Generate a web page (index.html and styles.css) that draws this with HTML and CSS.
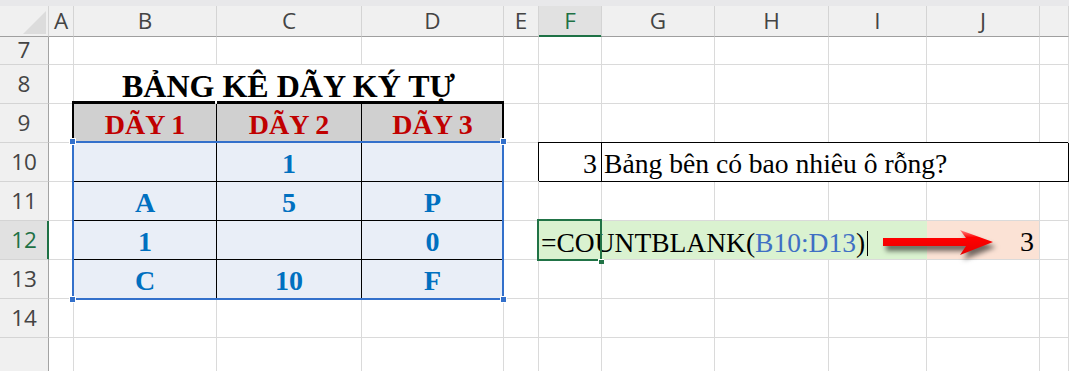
FILE: index.html
```html
<!DOCTYPE html>
<html lang="vi">
<head>
<meta charset="utf-8">
<title>Bảng kê dãy ký tự</title>
<link rel="stylesheet" href="styles.css">
</head>
<body>
<div class="app">
  <div class="topbar"></div>
  <div class="sheet">
    <!-- column headers -->
    <div class="ch corner"></div>
    <div class="ch">A</div>
    <div class="ch">B</div>
    <div class="ch">C</div>
    <div class="ch">D</div>
    <div class="ch">E</div>
    <div class="ch on">F</div>
    <div class="ch">G</div>
    <div class="ch">H</div>
    <div class="ch">I</div>
    <div class="ch">J</div>
    <div class="ch"></div>

    <!-- row 7 -->
    <div class="rh">7</div>
    <div class="c"></div><div class="c"></div><div class="c"></div><div class="c"></div><div class="c"></div>
    <div class="c"></div><div class="c"></div><div class="c"></div><div class="c"></div><div class="c"></div><div class="c"></div>

    <!-- row 8 -->
    <div class="rh">8</div>
    <div class="c"></div>
    <div class="c title">BẢNG KÊ DÃY KÝ TỰ</div>
    <div class="c"></div><div class="c"></div><div class="c"></div><div class="c"></div><div class="c"></div><div class="c"></div><div class="c"></div>

    <!-- row 9 -->
    <div class="rh">9</div>
    <div class="c"></div>
    <div class="c th first">DÃY 1</div>
    <div class="c th">DÃY 2</div>
    <div class="c th last">DÃY 3</div>
    <div class="c"></div><div class="c"></div><div class="c"></div><div class="c"></div><div class="c"></div><div class="c"></div><div class="c"></div>

    <!-- row 10 -->
    <div class="rh">10</div>
    <div class="c"></div>
    <div class="c td"></div>
    <div class="c td">1</div>
    <div class="c td"></div>
    <div class="c"></div>
    <div class="c box num">3</div>
    <div class="c box question">Bảng bên có bao nhiêu ô rỗng?</div>

    <!-- row 11 -->
    <div class="rh">11</div>
    <div class="c"></div>
    <div class="c td">A</div>
    <div class="c td">5</div>
    <div class="c td">P</div>
    <div class="c"></div><div class="c"></div><div class="c"></div><div class="c"></div><div class="c"></div><div class="c"></div><div class="c"></div>

    <!-- row 12 -->
    <div class="rh on">12</div>
    <div class="c"></div>
    <div class="c td">1</div>
    <div class="c td"></div>
    <div class="c td">0</div>
    <div class="c"></div>
    <div class="c formula">=COUNTBLANK(<span class="ref">B10:D13</span>)<span class="caret"></span></div>
    <div class="c result">3</div>
    <div class="c"></div>

    <!-- row 13 -->
    <div class="rh">13</div>
    <div class="c"></div>
    <div class="c td">C</div>
    <div class="c td">10</div>
    <div class="c td">F</div>
    <div class="c"></div><div class="c"></div><div class="c"></div><div class="c"></div><div class="c"></div><div class="c"></div><div class="c"></div>

    <!-- row 14 -->
    <div class="rh">14</div>
    <div class="c"></div><div class="c"></div><div class="c"></div><div class="c"></div><div class="c"></div>
    <div class="c"></div><div class="c"></div><div class="c"></div><div class="c"></div><div class="c"></div><div class="c"></div>

    <!-- row 15 -->
    <div class="rh"></div>
    <div class="c"></div><div class="c"></div><div class="c"></div><div class="c"></div><div class="c"></div>
    <div class="c"></div><div class="c"></div><div class="c"></div><div class="c"></div><div class="c"></div><div class="c"></div>

    <!-- selected range B10:D13 -->
    <div class="selection">
      <i class="h tl"></i><i class="h tr"></i><i class="h bl"></i><i class="h br"></i>
    </div>
    <!-- active cell F12 -->
    <div class="active"></div>
    <!-- callout arrow -->
    <svg class="arrow" width="125" height="42" viewBox="0 0 125 42">
      <defs>
        <linearGradient id="redfill" x1="0" y1="0" x2="0" y2="1">
          <stop offset="0" stop-color="#ff8a8a"/>
          <stop offset="0.3" stop-color="#ff0000"/>
          <stop offset="1" stop-color="#e60000"/>
        </linearGradient>
      </defs>
      <path d="M5,14 L88,14 L82,6 L115,18 L82,31 L88,22 L5,22 Z" fill="url(#redfill)"/>
    </svg>
  </div>
</div>
</body>
</html>
```
FILE: styles.css
```css
html, body {
  margin: 0;
  padding: 0;
  background: #fff;
  overflow: hidden;
}

.app {
  width: 1069px;
  height: 371px;
  overflow: hidden;
  display: flex;
  flex-direction: column;
}

.topbar {
  flex: none;
  height: 6px;
  background: #e8e8ea;
}

/* worksheet grid: row header + columns A..K */
.sheet {
  position: relative;
  flex: none;
  display: grid;
  grid-template-columns: 49px 25px 143px 145px 142px 35px 63px 113px 114px 98px 113px 1fr;
  grid-template-rows: 31px 28px repeat(8, 39px);
}

/* headers */
.ch,
.rh {
  box-sizing: border-box;
  background: #f0f0f0;
  color: #444;
  font-family: "Open Sans", "Liberation Sans", sans-serif;
  font-size: 22.5px;
  line-height: 1;
  display: flex;
  align-items: center;
  justify-content: center;
}

.ch {
  border-right: 1px solid #d4d4d4;
  border-bottom: 1px solid #9f9f9f;
}

.rh {
  border-right: 1px solid #a3a3a3;
  border-bottom: 1px solid #d4d4d4;
}

.ch.on {
  background: #e1e1e1;
  color: #1e7145;
  border-bottom-color: #1e7145;
  box-shadow: inset 0 -1px 0 #1e7145;
}

.rh.on {
  background: #e1e1e1;
  color: #1e7145;
  border-right-color: #1e7145;
  box-shadow: inset -1px 0 0 #1e7145;
}

.corner {
  justify-content: flex-end;
  align-items: flex-end;
  padding: 0 2px 2px 0;
}

.corner::after {
  content: "";
  width: 23px;
  height: 23px;
  background: #dcdcdc;
  clip-path: polygon(100% 0, 100% 100%, 0 100%);
}

/* cells */
.c {
  box-sizing: border-box;
  min-width: 0;
  border-right: 1px solid #dadada;
  border-bottom: 1px solid #dadada;
  display: flex;
  align-items: flex-end;
  padding: 0 3px 3px;
  font-family: "Liberation Serif", "Times New Roman", serif;
  font-size: 28px;
  line-height: 1;
  white-space: nowrap;
  color: #000;
}

.title {
  grid-column: span 3;
  justify-content: center;
  font-weight: bold;
  font-size: 32px;
  padding-bottom: 1px;
}

/* table header row */
.th {
  background: #d0d0d0;
  color: #c00000;
  font-weight: bold;
  justify-content: center;
  border-right-color: #000;
  border-bottom-color: #000;
  box-shadow: 0 -3px 0 #000;
}

.th.first {
  box-shadow: -2px -3px 0 #000, -2px 0 0 #000;
}

.th.last {
  box-shadow: 0 -3px 0 #000, inset -1px 0 0 #000;
}

/* table body */
.td {
  background: #e9eef7;
  color: #0070c0;
  font-weight: bold;
  justify-content: center;
  border-right-color: #000;
  border-bottom-color: #000;
}

/* question box F10:K10 */
.box {
  border-right-color: #000;
  border-bottom-color: #000;
  box-shadow: -1px -1px 0 #000;
}

.num {
  justify-content: flex-end;
  padding-right: 4px;
}

.question {
  grid-column: span 5;
  padding-left: 2px;
  font-size: 27.6px;
}

/* formula typed in F12, spilling over to I12 */
.formula {
  grid-column: span 4;
  background: #daf2d0;
  border-right-color: #daf2d0;
  padding-left: 2px;
  font-size: 27.5px;
}

.ref {
  color: #3f6fc4;
}

.caret {
  display: inline-block;
  width: 1px;
  height: 25px;
  margin-left: 2px;
  background: #000;
  vertical-align: -1px;
}

.result {
  background: #fbe2d5;
  justify-content: flex-end;
  padding-right: 5px;
}

/* selection outline over B10:D13 */
.selection {
  position: absolute;
  left: 72px;
  top: 135px;
  width: 432px;
  height: 159px;
  box-sizing: border-box;
  border: 2px solid #3370cb;
  pointer-events: none;
}

.h {
  position: absolute;
  width: 5px;
  height: 5px;
  background: #3370cb;
  border: 1px solid #fff;
}

.tl { left: -5px; top: -5px; }
.tr { right: -5px; top: -5px; }
.bl { left: -5px; bottom: -5px; }
.br { right: -5px; bottom: -5px; }

/* active cell F12 */
.active {
  position: absolute;
  left: 537px;
  top: 213px;
  width: 65px;
  height: 42px;
  box-sizing: border-box;
  border: 2px solid #217346;
  pointer-events: none;
}

.active::after {
  content: "";
  position: absolute;
  right: -4px;
  bottom: -5px;
  width: 5px;
  height: 4px;
  background: #217346;
  border-left: 1px solid #fff;
  border-top: 1px solid #fff;
}

.arrow {
  position: absolute;
  left: 878px;
  top: 218px;
  filter: drop-shadow(3px 5px 2.5px rgba(0, 0, 0, 0.55));
}
```
